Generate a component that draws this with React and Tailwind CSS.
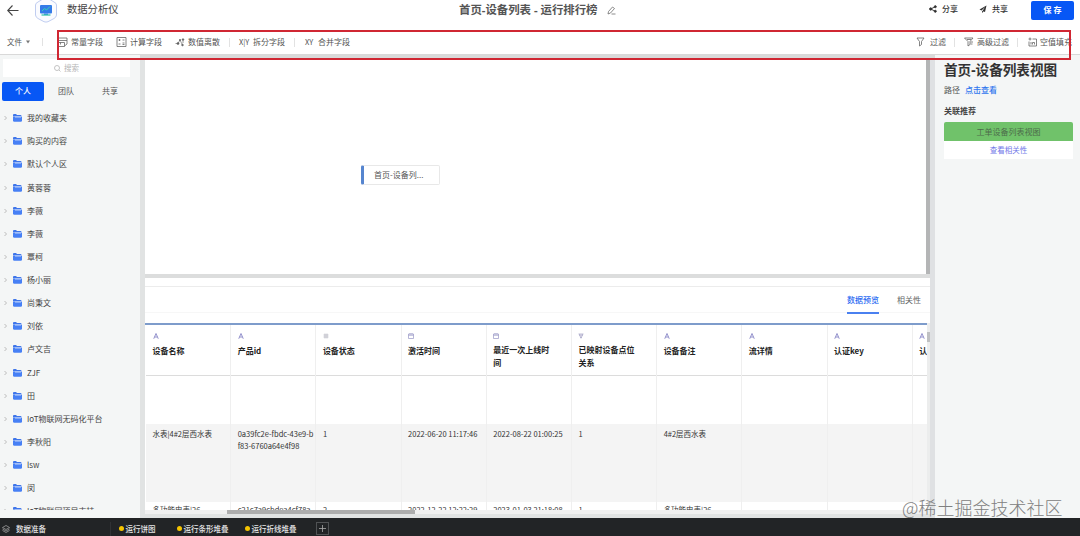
import React from "react";

const folders = [
  "我的收藏夹", "购买的内容", "默认个人区", "黄蓉蓉", "李薇", "李薇", "覃柯", "杨小丽", "尚秉文",
  "刘依", "卢文吉", "ZJF", "田", "IoT物联网无码化平台", "李秋阳", "lsw", "闵", "IoT物联网项目支持",
];

const columns = [
  { type: "A", name: "设备名称", a: "水表|4#2层西水表", b: "多功能电表|26" },
  { type: "A", name: "产品id", a: "0a39fc2e-fbdc-43e9-bf83-6760a64e4f98", b: "c21c7a9cbdea4cf78a" },
  { type: "#", name: "设备状态", a: "1", b: "2" },
  { type: "D", name: "激活时间", a: "2022-06-20 11:17:46", b: "2022-12-22 12:22:29" },
  { type: "D", name: "最近一次上线时间", a: "2022-08-22 01:00:25", b: "2023-01-03 21:18:08" },
  { type: "T", name: "已映射设备点位关系", a: "1", b: "1" },
  { type: "A", name: "设备备注", a: "4#2层西水表", b: "多功能电表|26" },
  { type: "A", name: "流详情", a: "", b: "" },
  { type: "A", name: "认证key", a: "", b: "" },
  { type: "A", name: "认证方式", a: "", b: "" },
];

function Folder() {
  return (
    <svg className="ml-[6px] h-[8px] w-[9px] shrink-0" viewBox="0 0 18 16">
      <path d="M0 2Q0 0 2 0H6L8 2H15Q17 2 17 4V5H0Z" fill="#3f76ea" />
      <path d="M0 5.5H18V13Q18 15.500 15.500 15.500H2.500Q0 15.500 0 13Z" fill="#4780f5" />
      <path d="M4 6H16" stroke="#c9dafc" strokeWidth="1.800" />
    </svg>
  );
}

function TypeIcon({ type }) {
  if (type === "A")
    return (
      <svg className="h-[6px] w-[6px]" viewBox="0 0 12 12" fill="none" stroke="#8886c6" strokeWidth="1.800">
        <path d="M1.500 11.500L6 1L10.500 11.500M3.300 8H8.700" />
      </svg>
    );
  if (type === "#")
    return (
      <svg className="h-[6px] w-[6px]" viewBox="0 0 12 12" fill="none" stroke="#a5a6b4" strokeWidth="1.200">
        <path d="M1 4H11M1 8H11M4 1V11M8 1V11" />
      </svg>
    );
  if (type === "D")
    return (
      <svg className="h-[6px] w-[6px]" viewBox="0 0 12 12" fill="none" stroke="#9896c6" strokeWidth="1.400">
        <path d="M1 2H11V11H1ZM1 4.500H11M4 0V3M8 0V3" />
      </svg>
    );
  return (
    <svg className="h-[6px] w-[6px]" viewBox="0 0 12 12" fill="none" stroke="#a3a2c4" strokeWidth="1.400">
      <path d="M1 2H11M3 2V6H9V2M6 2V11M4 9H8" />
    </svg>
  );
}

function Tool({ icon, label }) {
  return (
    <div className="flex shrink-0 items-center whitespace-nowrap">
      <span className="flex w-[14px] items-center">{icon}</span>
      <span>{label}</span>
    </div>
  );
}

const line = { fill: "none", stroke: "#666", strokeWidth: 1.6 };

function Toolbar() {
  return (
    <div className="flex h-[26px] shrink-0 items-center bg-white pt-[2px] text-[8px] text-[#555]">
      <div className="flex w-[35px] items-center pl-[7px] text-[7.5px] whitespace-nowrap">
        文件
        <svg className="ml-[4px] h-[4px] w-[4px] shrink-0" viewBox="0 0 8 8"><path d="M0 1H8L4 7Z" fill="#777" /></svg>
      </div>
      <div className="ml-[7px] h-[8px] w-px bg-[#e2e2e2]" />
      <div className="ml-[14px] flex items-center">
        <div className="w-[59px]">
          <Tool label="常量字段" icon={
            <svg className="h-[10px] w-[11px]" viewBox="0 0 22 20" {...line}><path d="M2 2H20V14M2 2V7H20M2 11H15V19H2ZM7 11V15M20 14L15 18" /></svg>
          } />
        </div>
        <div className="w-[59px]">
          <Tool label="计算字段" icon={
            <svg className="h-[10px] w-[11px]" viewBox="0 0 22 20" {...line}><path d="M2 1H20V19H2ZM5 6H9M7 4V8M13 6H17M5 14H9M13 12H17M13 15H17" /></svg>
          } />
        </div>
        <div className="w-[54px] [&>div>span:first-child]:w-[13px]">
          <Tool label="数值离散" icon={
            <svg className="h-[9px] w-[10px]" viewBox="0 0 20 18" {...line} strokeWidth="1.300"><path d="M1 11H5M6 11L10 4L15 14M16 3V10" /><circle cx="6" cy="11" r="2" fill="#555" /><circle cx="10" cy="4" r="1.300" fill="#555" /><circle cx="15" cy="14" r="1.700" fill="#555" /><circle cx="16" cy="3" r="1.700" fill="#555" /></svg>
          } />
        </div>
        <div className="h-[9px] w-px bg-[#e2e2e2]" />
        <div className="ml-[9px] w-[55px]"><Tool label="拆分字段" icon={<span className="text-[7.5px]">X|Y</span>} /></div>
        <div className="h-[9px] w-px bg-[#e2e2e2]" />
        <div className="ml-[10px] [&>div>span:first-child]:w-[13px]"><Tool label="合并字段" icon={<span className="text-[7.5px]">XY</span>} /></div>
      </div>
      <div className="ml-auto flex w-[164px] items-center">
        <div className="flex w-[38px] items-center">
          <Tool label="过滤" icon={
            <svg className="h-[10px] w-[9px]" viewBox="0 0 18 20" {...line}><path d="M2 2H16L11 9V15L7 18V9Z" /></svg>
          } />
        </div>
        <div className="h-[9px] w-px bg-[#e2e2e2]" />
        <div className="ml-[9px] w-[53px] [&>div>span:first-child]:w-[13px]">
          <Tool label="高级过滤" icon={
            <svg className="h-[10px] w-[10px]" viewBox="0 0 20 20" {...line}><path d="M1 2H18L12 9V15L8 18V9ZM6 5H14M13 10H18M13 14H17" /></svg>
          } />
        </div>
        <div className="h-[9px] w-px bg-[#e2e2e2]" />
        <div className="ml-[10px] [&>div>span:first-child]:w-[12px]">
          <Tool label="空值填充" icon={
            <svg className="h-[10px] w-[9px]" viewBox="0 0 18 20" {...line}><path d="M9 4H17V18H2V9M1 4H7M4 1V7M6 10V15M9 15V11H13V15" /></svg>
          } />
        </div>
      </div>
    </div>
  );
}

function Header() {
  return (
    <header className="relative flex h-[28px] shrink-0 items-start bg-white">
      <svg className="mt-[5px] ml-[7px] h-[11px] w-[12px]" viewBox="0 0 24 22" fill="none" stroke="#444" strokeWidth="2.200"><path d="M23 11H2M11 1L1.500 11L11 21" /></svg>
      <svg className="ml-[15px] h-[23px] w-[24px]" viewBox="0 0 24 23">
        <path d="M4 2L12 -3L20 2Q22.500 3 22.500 5V15Q22.500 17 20 18.500L14 21.700Q12 22.500 10 21.700L4 18.500Q1.500 17 1.500 15V5Q1.500 3 4 2Z" fill="#fafbff" stroke="#b9c7ee" strokeWidth=".9" />
        <rect x="6" y="5" width="12" height="8.500" rx="1" fill="#347be8" />
        <path d="M8 11L10.500 8.500L12.500 10L16 6.500" fill="none" stroke="#35d6b2" strokeWidth="1" />
        <path d="M10 13.500H14V15H10Z" fill="#347be8" /><path d="M7.500 15H16.500" stroke="#36c5aa" strokeWidth="1.300" />
      </svg>
      <div className="mt-[2px] ml-[9px] text-[10.3px] leading-[14px] text-[#444]">数据分析仪</div>
      <div className="absolute top-[2px] left-[459px] flex items-center font-['Noto_Sans','Noto_Sans_CJK_SC',sans-serif] text-[11.4px] leading-[16px] font-bold whitespace-nowrap text-[#555]">
        首页-设备列表 - 运行排行榜
        <svg className="ml-[9px] h-[9px] w-[9px]" viewBox="0 0 18 18" fill="none" stroke="#666" strokeWidth="1.500"><path d="M2 16L3 11L11 2L15 5L7 14ZM9 16H17" /></svg>
      </div>
      <div className="mt-[3px] ml-auto flex items-center text-[8px] leading-[12px] font-medium text-[#333]">
        <svg className="h-[8px] w-[8px]" viewBox="0 0 14 14" stroke="#333" strokeWidth="1.600" fill="#333"><path d="M11 3L3 7L11 11" fill="none" /><circle cx="11" cy="3" r="1.800" /><circle cx="3" cy="7" r="2" /><circle cx="11" cy="11" r="1.800" /></svg>
        <span className="ml-[5px] w-[37px]">分享</span>
        <svg className="h-[8px] w-[8px]" viewBox="0 0 14 16" fill="#333"><path d="M14 1L0 9L4 11L11 4L6 12L11 14ZM5 12V16L8 13Z" /></svg>
        <span className="ml-[5px]">共享</span>
      </div>
      <button className="mt-px mr-[6px] ml-[23px] flex h-[19px] w-[43px] items-center justify-center rounded-[2px] bg-[#0757f5] pb-px text-[8px] font-bold text-white">保 存</button>
    </header>
  );
}

function Sidebar() {
  return (
    <aside className="flex h-full w-[140px] shrink-0 flex-col bg-[#f4f6f6] pt-[4px]">
      <div className="ml-[3px] flex h-[18px] w-[127px] shrink-0 items-center justify-center bg-white text-[7.5px] text-[#b5b5b5]">
        <svg className="mr-[3px] h-[7px] w-[7px]" viewBox="0 0 14 14" fill="none" stroke="#b0b0b0" strokeWidth="1.500"><circle cx="6" cy="6" r="5" /><path d="M10 10L13 13" /></svg>
        搜索
      </div>
      <div className="mt-[5px] ml-[2px] flex h-[19px] shrink-0 text-center text-[8px] leading-[18px] text-[#555]">
        <div className="w-[42px] rounded-[2px] bg-[#0757f5] font-medium text-white">个人</div>
        <div className="w-[44px]">团队</div>
        <div className="w-[44px]">共享</div>
      </div>
      <div className="mt-[5.600px] h-[403px] shrink-0 overflow-hidden">
        {folders.map((name, i) => (
          <div key={i} className="flex h-[23.130px] items-center pl-[4px] text-[8px] whitespace-nowrap text-[#444]">
            <svg className="h-[4px] w-[3px] shrink-0" viewBox="0 0 6 8" fill="none" stroke="#aaa" strokeWidth="1.500"><path d="M1 0L5 4L1 8" /></svg>
            <Folder />
            <span className="ml-[5px]">{name}</span>
          </div>
        ))}
      </div>
    </aside>
  );
}

function DataTable() {
  return (
    <div className="h-[187px] w-[782px] shrink-0 overflow-hidden border-t-2 border-[#7e9ccb] bg-white pl-px text-[7.500px] text-[#333]">
      <div className="flex w-[853px]">
        {columns.map((c) => (
          <div key={c.name} className="w-[85.200px] shrink-0 border-r border-[#efefef]">
            <div className="flex h-[51px] flex-col border-b border-[#dcdcdc] pt-[8px] pl-[6.500px]">
              <TypeIcon type={c.type} />
              <div className={"w-[60px] text-[8px] leading-[12.500px] font-bold text-[#222] " + (c.name.length > 6 ? "mt-[5px]" : "mt-[6px]")}>{c.name}</div>
            </div>
            <div className="h-[48px]" />
            <div className="h-[78px] bg-[#f4f4f4] pt-[4px] pl-[6.500px] leading-[11.500px]">
              <div className="w-[76.500px] break-all">{c.a}</div>
            </div>
            <div className="pt-[2px] pl-[6.500px] leading-[11.500px] whitespace-nowrap">{c.b}</div>
          </div>
        ))}
      </div>
    </div>
  );
}

function Workspace() {
  return (
    <main className="flex h-full w-[790px] shrink-0 flex-col bg-[#e1e3e3] pl-[5px]">
      <div className="flex h-[219px] shrink-0">
        <div className="w-[781px] bg-white pt-[110px] pl-[216px]">
          <div className="flex h-[20px] w-[79px] items-center rounded-[2px] border border-l-[3px] border-[#e8e8e8] border-l-[#5685cf] pl-[10px] text-[8px] text-[#555]">首页-设备列...</div>
        </div>
        <div className="w-[4px] bg-[#b4b5b6]" />
      </div>
      <div className="h-[4px] shrink-0 bg-[#dcdddd]" />
      <div className="h-[45px] w-[785px] shrink-0 bg-white pt-[8px]">
        <div className="flex h-[27px] justify-end border-t border-b border-t-[#ececec] border-b-[#f7f7f7] pr-[9px] text-[8px] text-[#666]">
          <div className="h-[27px] w-[32px] border-b-2 border-[#4a80f0] pt-[7px] font-medium whitespace-nowrap text-[#2c6cf2]">数据预览</div>
          <div className="ml-[18px] pt-[7px]">相关性</div>
        </div>
      </div>
      <div className="flex w-[785px] shrink-0 bg-[#eceded]">
        <DataTable />
        <div className="mt-[9px] h-[10px] w-[3px] bg-[#bfc0c2]" />
      </div>
      <div className="h-[4px] w-[785px] shrink-0 bg-[#f0f0f0] pl-[82px]">
        <div className="h-[4px] w-[188px] bg-[#adadad]" />
      </div>
    </main>
  );
}

function Details() {
  return (
    <aside className="h-full min-w-0 flex-1 bg-[#f4f6f6] pt-[5px] pr-[7px] pl-[9px] text-[8px] text-[#555]">
      <h1 className="font-['Noto_Sans','Noto_Sans_CJK_SC',sans-serif] text-[13.600px] leading-[20px] font-bold whitespace-nowrap text-[#333]">首页-设备列表视图</h1>
      <div className="mt-[4px] leading-[12px]">路径<span className="ml-[5px] font-medium text-[#2f75ee]">点击查看</span></div>
      <div className="mt-[9px] leading-[12px] font-bold text-[#444]">关联推荐</div>
      <div className="mt-[5px] h-[19px] rounded-t-[2px] bg-[#70c26a] text-center leading-[19px] text-[#4d6d4a]">工单设备列表视图</div>
      <div className="h-[18px] bg-white text-center text-[7.500px] leading-[17px] text-[#7078e8]">查看相关性</div>
    </aside>
  );
}

function Footer() {
  const tabs = [["运行饼图", "w-[58px]"], ["运行条形堆叠", "w-[68px]"], ["运行折线堆叠", "w-[59px]"]];
  return (
    <footer className="flex h-[18px] shrink-0 items-center bg-[#222426] pt-[3px] text-[7.500px] leading-[12px] font-medium text-[#e6e6e6]">
      <svg className="ml-[2px] h-[8px] w-[8px]" viewBox="0 0 16 16" fill="none" stroke="#aaa" strokeWidth="1.400"><path d="M1 5L8 1L15 5L8 9ZM1 8L8 12L15 8M1 11L8 15L15 11" /></svg>
      <div className="ml-[6px] w-[94px]">数据准备</div>
      <div className="h-[14px] w-px bg-[#303235]" />
      <div className="ml-[8px] flex">
        {tabs.map(([label, width]) => (
          <div key={label} className={"flex items-center whitespace-nowrap " + width}>
            <span className="mr-[2px] h-[4.500px] w-[4.500px] rounded-full bg-[#f5c400]" />{label}
          </div>
        ))}
      </div>
      <div className="ml-[12px] flex h-[13px] w-[13px] items-center justify-center border border-[#505254]">
        <svg className="h-[7px] w-[7px]" viewBox="0 0 7 7" stroke="#aaa" strokeWidth=".8"><path d="M3.500 0V7M0 3.500H7" /></svg>
      </div>
    </footer>
  );
}

export default function App() {
  return (
    <div className="relative flex h-[536px] w-[1080px] flex-col overflow-hidden bg-[#e1e3e3] font-['Noto_Sans_CJK_SC',sans-serif]">
      <Header />
      <Toolbar />
      <div className="flex h-[464px] shrink-0 border-t border-[#d9d9d9]">
        <Sidebar />
        <Workspace />
        <div className="w-[5px] shrink-0 bg-[#dfe1e3]" />
        <Details />
      </div>
      <Footer />
      <div className="pointer-events-none absolute top-[55px] left-[140px] h-[4px] w-[795px] bg-[#dadada]" />
      <div className="pointer-events-none absolute top-[30px] left-[57px] h-[30px] w-[1014px] border-2 border-[#d02733]" />
      <div className="pointer-events-none absolute top-[494px] left-[902px] text-[18px] leading-[26px] font-light whitespace-nowrap text-[#808080]">@稀土掘金技术社区</div>
    </div>
  );
}
